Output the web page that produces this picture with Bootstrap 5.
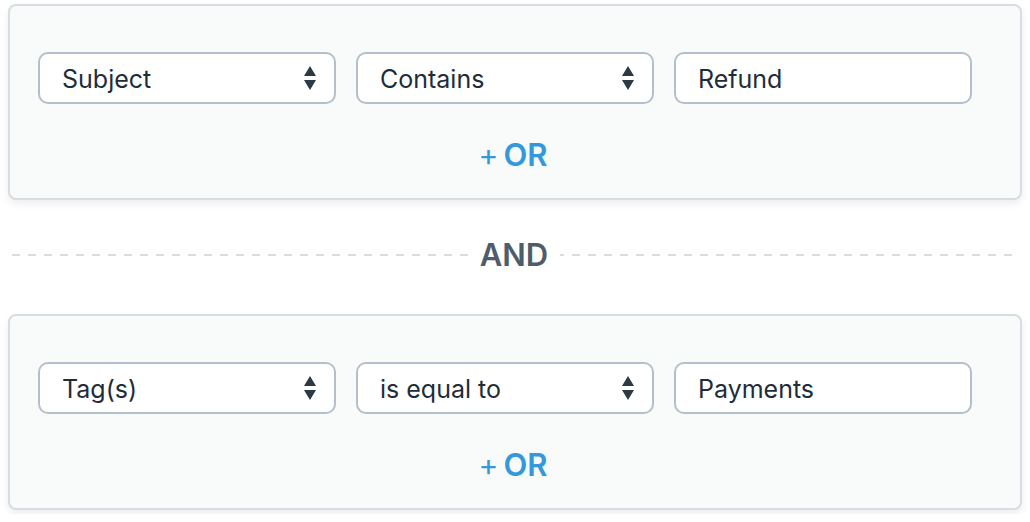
<!DOCTYPE html>
<html lang="en">
<head>
<meta charset="utf-8">
<meta name="viewport" content="width=device-width, initial-scale=1">
<title>Conditions</title>
<link href="https://cdn.jsdelivr.net/npm/bootstrap@5.3.0/dist/css/bootstrap.min.css" rel="stylesheet">
<style>
body{font-family:Inter,"Liberation Sans",sans-serif;color:#1f2d3a;background:#fff}
.rules{padding:4px 8px}
.group{background:#f9fbfa;border:2px solid #d6dde3;border-radius:8px;padding:46px 48px 23px 28px;box-shadow:0 4px 8px rgba(0,0,0,.07)}
.fields{display:grid;grid-template-columns:repeat(3,1fr);gap:20px}
.field,.field:focus{height:52px;border:2px solid #b3c0cc;border-radius:10px;padding:2px 22px 0;font-size:25px;line-height:32px;color:#1f2d3a;background-color:#fff}
.form-select.field{background-image:url("data:image/svg+xml,%3Csvg xmlns='http://www.w3.org/2000/svg' viewBox='0 0 14 24'%3E%3Cpath fill='%232b3a45' d='M7 0l6 10H1zM7 24l6-10H1z'/%3E%3C/svg%3E");background-size:14px 24px;background-position:right 17px center}
.add-row{padding-top:31px;padding-left:16px}
.add-or{font-size:31px;line-height:40px;font-weight:600;color:#3498db;gap:5px}
.add-or .plus{font-size:30px;font-weight:400}
.divider{height:110px;margin:0 4px 4px;background:repeating-linear-gradient(90deg,#d6dde3 0 8px,transparent 8px 16px) center/100% 2px no-repeat}
.divider .word{font-size:31px;line-height:40px;font-weight:600;color:#4f5d6b;background:#fff;padding:0 12px 0 10px}
</style>
</head>
<body>
<main class="rules">
<section class="group">
<div class="fields">
<select class="form-select field" aria-label="Field"><option>Subject</option></select>
<select class="form-select field" aria-label="Operator"><option>Contains</option></select>
<input class="form-control field" type="text" aria-label="Value" value="Refund">
</div>
<div class="add-row d-flex justify-content-center"><button type="button" class="btn p-0 border-0 d-flex align-items-center add-or"><span class="plus">+</span><span>OR</span></button></div>
</section>
<div class="divider d-flex align-items-center justify-content-center"><span class="word">AND</span></div>
<section class="group">
<div class="fields">
<select class="form-select field" aria-label="Field"><option>Tag(s)</option></select>
<select class="form-select field" aria-label="Operator"><option>is equal to</option></select>
<input class="form-control field" type="text" aria-label="Value" value="Payments">
</div>
<div class="add-row d-flex justify-content-center"><button type="button" class="btn p-0 border-0 d-flex align-items-center add-or"><span class="plus">+</span><span>OR</span></button></div>
</section>
</main>
<script src="https://cdn.jsdelivr.net/npm/bootstrap@5.3.0/dist/js/bootstrap.bundle.min.js"></script>
</body>
</html>
